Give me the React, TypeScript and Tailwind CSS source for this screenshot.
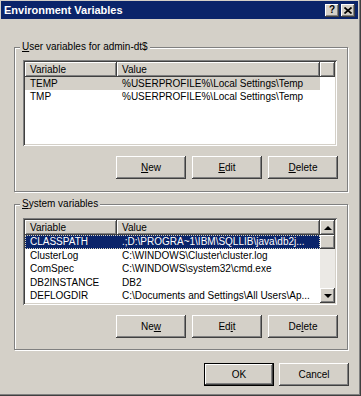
import type React from 'react'

const raised =
	'bg-[#d4d0c8] shadow-[inset_-1px_-1px_0_#404040,inset_1px_1px_0_#ffffff,inset_-2px_-2px_0_#808080,inset_2px_2px_0_#d4d0c8]'
const sunken =
	'shadow-[inset_1px_1px_0_#808080,inset_-1px_-1px_0_#ffffff,inset_2px_2px_0_#404040,inset_-2px_-2px_0_#d4d0c8]'
const etched = 'border border-[#808080] shadow-[inset_1px_1px_0_#ffffff,1px_1px_0_#ffffff]'

// label with one underlined access key
const Key: React.FC<{ text: string; at: number }> = ({ text, at }) => (
	<>
		{text.slice(0, at)}
		<span className="underline underline-offset-[1px]">{text[at]}</span>
		{text.slice(at + 1)}
	</>
)

const Button: React.FC<{ text: string; at?: number; isDefault?: boolean }> = ({
	text,
	at,
	isDefault,
}) => (
	<div
		className={`w-[70px] h-[23px] flex items-center justify-center ${
			isDefault ? 'border border-black' : ''
		}`}
	>
		<div className={`${raised} w-full h-full flex items-center justify-center`}>
			{at === undefined ? text : <Key text={text} at={at} />}
		</div>
	</div>
)

const HeaderCell: React.FC<{ className?: string; children?: React.ReactNode }> = ({
	className,
	children,
}) => (
	<div className={`${raised} h-[15px] flex items-center pl-[5px] ${className ?? ''}`}>
		{children}
	</div>
)

const GroupBox: React.FC<{
	label: React.ReactNode
	className?: string
	children: React.ReactNode
}> = ({ label, className, children }) => (
	<div className={`relative ml-[13px] w-[334px] ${etched} ${className ?? ''}`}>
		<span className="absolute -top-[8px] left-[5px] px-[2px] bg-[#d4d0c8] leading-[14px]">
			{label}
		</span>
		{children}
	</div>
)

const userVars = [
	['TEMP', '%USERPROFILE%\\Local Settings\\Temp'],
	['TMP', '%USERPROFILE%\\Local Settings\\Temp'],
]

const systemVars = [
	['CLASSPATH', '.;D:\\PROGRA~1\\IBM\\SQLLIB\\java\\db2j...'],
	['ClusterLog', 'C:\\WINDOWS\\Cluster\\cluster.log'],
	['ComSpec', 'C:\\WINDOWS\\system32\\cmd.exe'],
	['DB2INSTANCE', 'DB2'],
	['DEFLOGDIR', 'C:\\Documents and Settings\\All Users\\Ap...'],
]

export default function App() {
	return (
		<div className="w-[361px] h-[396px] bg-[#d4d0c8] pl-[1px] pt-[1px] pr-[3px] pb-[3px] shadow-[inset_-1px_-1px_0_#404040,inset_-2px_-2px_0_#808080] font-['Liberation_Sans',Arial,sans-serif] text-[10px] text-black overflow-hidden">
			{/* Title bar */}
			<div className="h-[18px] bg-[#0a246a] flex items-center justify-between pl-[3px] pr-[3px]">
				<span className="text-white font-bold text-[11px] leading-none">
					Environment Variables
				</span>
				<div className="flex gap-[2px]">
					<div className={`${raised} w-[14px] h-[13px] flex items-center justify-center font-bold text-[10px] leading-none`}>
						?
					</div>
					<div className={`${raised} w-[14px] h-[13px] flex items-center justify-center`}>
						<svg width="8" height="7" viewBox="0 0 8 7">
							<path d="M0.5 0.5 L7.5 6.5 M7.5 0.5 L0.5 6.5" stroke="#000" strokeWidth="1.7" />
						</svg>
					</div>
				</div>
			</div>

			{/* User variables */}
			<GroupBox label={<Key text="User variables for admin-dt$" at={0} />} className="mt-[28px] h-[145px]">
				<div className={`ml-[8px] mt-[12px] w-[314px] h-[86px] bg-white p-[2px] ${sunken}`}>
					<div className="flex">
						<HeaderCell className="w-[92px]">Variable</HeaderCell>
						<HeaderCell className="w-[203px]">Value</HeaderCell>
						<HeaderCell className="flex-1" />
					</div>
					{userVars.map(([name, value], i) => (
						<div
							key={name}
							className={`flex w-[295px] h-[13px] items-center ${i === 0 ? 'bg-[#d4d0c8]' : ''}`}
						>
							<div className="w-[92px] pl-[5px]">{name}</div>
							<div className="pl-[5px]">{value}</div>
						</div>
					))}
				</div>
				<div className="flex justify-end gap-[6px] mt-[10px] mr-[9px]">
					<Button text="New" at={0} />
					<Button text="Edit" at={0} />
					<Button text="Delete" at={0} />
				</div>
			</GroupBox>

			{/* System variables */}
			<GroupBox label={<Key text="System variables" at={0} />} className="mt-[12px] h-[146px]">
				<div className={`ml-[8px] mt-[13px] w-[314px] h-[87px] bg-white p-[2px] flex ${sunken}`}>
					<div className="flex-1 flex flex-col">
						<div className="flex">
							<HeaderCell className="w-[92px]">Variable</HeaderCell>
							<HeaderCell className="flex-1">Value</HeaderCell>
						</div>
						{systemVars.map(([name, value], i) => (
							<div
								key={name}
								className={`flex h-[13.5px] items-center whitespace-nowrap ${
									i === 0
										? 'bg-[#0a246a] text-white outline outline-1 outline-dotted outline-[#d8d4c0] -outline-offset-1'
										: ''
								}`}
							>
								<div className="w-[92px] pl-[5px]">{name}</div>
								<div className="pl-[5px]">{value}</div>
							</div>
						))}
					</div>
					{/* Scrollbar */}
					<div className="w-[15px] flex flex-col bg-[#ebe9e5]">
						<div className={`${raised} h-[15px] flex items-center justify-center`}>
							<div className="w-0 h-0 border-x-[4px] border-x-transparent border-b-[4px] border-b-black" />
						</div>
						<div className={`${raised} h-[14px]`} />
						<div className="flex-1" />
						<div className={`${raised} h-[15px] flex items-center justify-center`}>
							<div className="w-0 h-0 border-x-[4px] border-x-transparent border-t-[4px] border-t-black" />
						</div>
					</div>
				</div>
				<div className="flex justify-end gap-[6px] mt-[10px] mr-[9px]">
					<Button text="New" at={2} />
					<Button text="Edit" at={2} />
					<Button text="Delete" at={2} />
				</div>
			</GroupBox>

			{/* Dialog buttons */}
			<div className="flex justify-end gap-[5px] mt-[13px] mr-[9px]">
				<Button text="OK" isDefault />
				<Button text="Cancel" />
			</div>
		</div>
	)
}
